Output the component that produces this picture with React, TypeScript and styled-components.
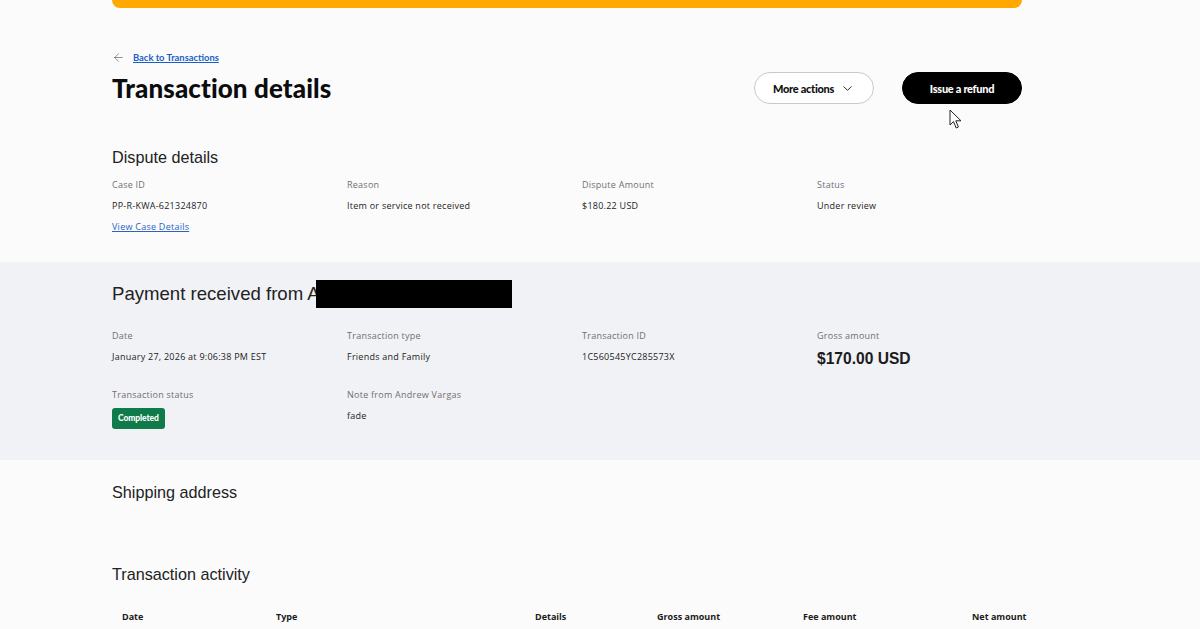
import React from "react";
import styled, { createGlobalStyle } from "styled-components";
import { ArrowLeft, ChevronDown } from "lucide-react";

const GlobalStyle = createGlobalStyle`
  html, body {
    margin: 0;
    padding: 0;
    background: #fbfbfc;
    color: #1b1b1b;
    font-family: "Open Sans", "Liberation Sans", Arial, sans-serif;
  }
`;

const Page = styled.div`
  min-height: 629px;
`;

const Inner = styled.div`
  width: 910px;
  padding-left: 112px;
`;

const AlertBar = styled.div`
  height: 8px;
  background: #ffa800;
  border-radius: 0 0 8px 8px;
`;

const BackRow = styled.a`
  display: flex;
  align-items: center;
  gap: 8px;
  height: 12px;
  margin-top: 43px;
  color: #555;
  text-decoration: none;
`;

const BackText = styled.span`
  font-family: "Lato", "Liberation Sans", sans-serif;
  font-size: 9.4px;
  font-weight: 700;
  color: #1a5fc7;
  text-decoration: underline;
`;

const TitleRow = styled.div`
  display: flex;
  align-items: center;
  justify-content: space-between;
  height: 32px;
  margin-top: 9px;
`;

const Title = styled.h1`
  margin: 0;
  font-family: "Lato", "Liberation Sans", sans-serif;
  font-weight: 900;
  font-size: 26px;
  line-height: 32px;
  letter-spacing: 0.1px;
  color: #0c0c0d;
`;

const Actions = styled.div`
  display: flex;
  gap: 28px;
  position: relative;
`;

const Pill = styled.button<{ $dark?: boolean }>`
  display: flex;
  align-items: center;
  justify-content: center;
  gap: 6px;
  width: 120px;
  height: 32px;
  border-radius: 16px;
  border: 1px solid ${({ $dark }) => ($dark ? "#000" : "#c9c9c9")};
  background: ${({ $dark }) => ($dark ? "#000" : "#fff")};
  color: ${({ $dark }) => ($dark ? "#fff" : "#111")};
  font-family: "Lato", "Liberation Sans", sans-serif;
  font-weight: 900;
  font-size: 11px;
  letter-spacing: -0.3px;
  padding: 0;
`;

const Cursor = styled.svg`
  position: absolute;
  left: 195px;
  top: 37px;
`;

const SectionTitle = styled.h2<{ $top: number; $large?: boolean }>`
  margin: ${({ $top }) => $top}px 0 0;
  font-family: "Liberation Sans", Arial, sans-serif;
  font-weight: 400;
  font-size: ${({ $large }) => ($large ? "18.6px" : "16.2px")};
  line-height: ${({ $large }) => ($large ? "22px" : "20px")};
  color: #222;
  white-space: nowrap;
`;

const Fields = styled.div<{ $top: number }>`
  display: grid;
  grid-template-columns: repeat(4, 205px);
  column-gap: 30px;
  margin-top: ${({ $top }) => $top}px;
`;

const Field = styled.div`
  display: flex;
  flex-direction: column;
`;

const Label = styled.div`
  font-size: 9px;
  letter-spacing: 0.25px;
  line-height: 12px;
  color: #6f6f6f;
`;

const Value = styled.div<{ $big?: boolean }>`
  margin-top: ${({ $big }) => ($big ? "8px" : "9px")};
  font-size: ${({ $big }) => ($big ? "15.6px" : "9px")};
  letter-spacing: ${({ $big }) => ($big ? "0" : "0.25px")};
  font-weight: ${({ $big }) => ($big ? 700 : 500)};
  font-family: ${({ $big }) =>
    $big ? '"Liberation Sans", Arial, sans-serif' : "inherit"};
  line-height: ${({ $big }) => ($big ? "18px" : "12px")};
  color: #1b1b1b;
  white-space: nowrap;
`;

const TextLink = styled.a`
  margin-top: 9px;
  font-size: 9px;
  letter-spacing: 0.25px;
  line-height: 12px;
  color: #2a63c4;
  text-decoration: underline;
`;

const Band = styled.section`
  margin-top: 29px;
  background: #f1f2f6;
  height: 198px;
  padding-top: 18px;
  box-sizing: border-box;
`;

const Redacted = styled.span`
  display: inline-block;
  width: 196px;
  height: 28px;
  background: #000;
  vertical-align: -8px;
  margin-left: -4px;
`;

const Badge = styled.span`
  align-self: flex-start;
  margin-top: 7px;
  padding: 0 6px;
  height: 21px;
  line-height: 21px;
  border-radius: 3px;
  background: #0f7a4a;
  color: #fff;
  font-family: "Lato", "Liberation Sans", sans-serif;
  font-size: 8.5px;
  font-weight: 900;
  letter-spacing: -0.1px;
`;

const Table = styled.div`
  display: grid;
  grid-template-columns: 154px 259px 122px 146px 169px 1fr;
  margin-top: 27px;
  padding-left: 10px;
`;

const Th = styled.div`
  font-size: 9px;
  font-weight: 700;
  line-height: 12px;
  color: #1b1b1b;
  white-space: nowrap;
`;

export default function App() {
  return (
    <Page>
      <GlobalStyle />
      <Inner>
        <AlertBar />
        <BackRow href="#">
          <ArrowLeft size={13} strokeWidth={1.2} />
          <BackText>Back to Transactions</BackText>
        </BackRow>
        <TitleRow>
          <Title>Transaction details</Title>
          <Actions>
            <Pill>
              More actions
              <ChevronDown size={15} strokeWidth={1.4} />
            </Pill>
            <Pill $dark>Issue a refund</Pill>
            <Cursor width="14" height="21" viewBox="0 0 14 21">
              <path
                d="M1 1 L1 16 L4.5 12.6 L7.2 19 L9.4 18 L6.8 11.8 L12 11.8 Z"
                fill="#fff"
                stroke="#222"
                strokeWidth="1"
                strokeLinejoin="round"
              />
            </Cursor>
          </Actions>
        </TitleRow>

        <SectionTitle $top={43}>Dispute details</SectionTitle>
        <Fields $top={12}>
          <Field>
            <Label>Case ID</Label>
            <Value>PP-R-KWA-621324870</Value>
            <TextLink href="#">View Case Details</TextLink>
          </Field>
          <Field>
            <Label>Reason</Label>
            <Value>Item or service not received</Value>
          </Field>
          <Field>
            <Label>Dispute Amount</Label>
            <Value>$180.22 USD</Value>
          </Field>
          <Field>
            <Label>Status</Label>
            <Value>Under review</Value>
          </Field>
        </Fields>
      </Inner>

      <Band>
        <Inner>
          <SectionTitle $top={0} $large>
            Payment received from A<Redacted />
          </SectionTitle>
          <Fields $top={22}>
            <Field>
              <Label>Date</Label>
              <Value>January 27, 2026 at 9:06:38 PM EST</Value>
            </Field>
            <Field>
              <Label>Transaction type</Label>
              <Value>Friends and Family</Value>
            </Field>
            <Field>
              <Label>Transaction ID</Label>
              <Value>1C560545YC285573X</Value>
            </Field>
            <Field>
              <Label>Gross amount</Label>
              <Value $big>$170.00 USD</Value>
            </Field>
          </Fields>
          <Fields $top={21}>
            <Field>
              <Label>Transaction status</Label>
              <Badge>Completed</Badge>
            </Field>
            <Field>
              <Label>Note from Andrew Vargas</Label>
              <Value>fade</Value>
            </Field>
          </Fields>
        </Inner>
      </Band>

      <Inner>
        <SectionTitle $top={22}>Shipping address</SectionTitle>
        <SectionTitle $top={62}>Transaction activity</SectionTitle>
        <Table>
          <Th>Date</Th>
          <Th>Type</Th>
          <Th>Details</Th>
          <Th>Gross amount</Th>
          <Th>Fee amount</Th>
          <Th>Net amount</Th>
        </Table>
      </Inner>
    </Page>
  );
}
